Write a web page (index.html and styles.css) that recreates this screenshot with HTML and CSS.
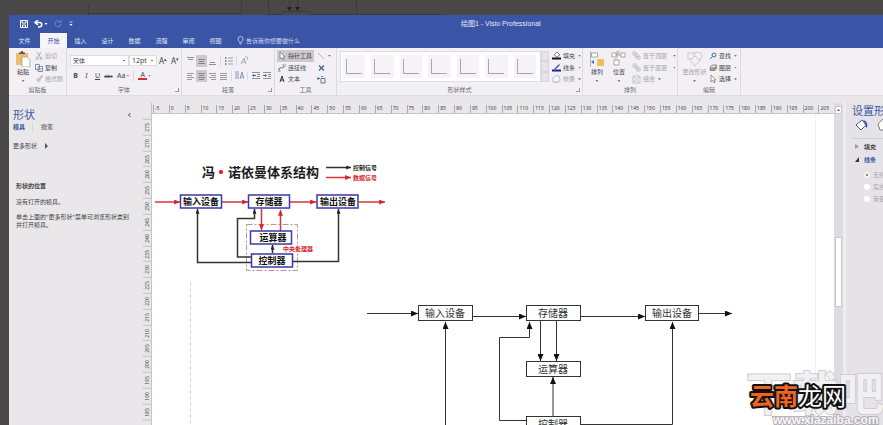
FILE: index.html
```html
<!DOCTYPE html>
<html lang="zh-CN">
<head>
<meta charset="utf-8">
<title>绘图1 - Visio Professional</title>
<link rel="stylesheet" href="styles.css">
</head>
<body>
<svg class="backdrop" aria-hidden="true"><path d="M88.500 5v10M241.500 0v15M268.500 0v15M356.500 0v15M289.500 0v10M297.500 0v10M282.500 15v-3.500h28v3.500M88 13.500h153M268 14.500h14M311 14.500h130"/><path class="tip" d="M287 7h5l-2.500 4zM295 7h5l-2.500 4z"/></svg>
<div class="app">
  <header class="titlebar">
    <div class="quick">
      <button aria-label="保存"><svg width="8" height="8"><path d="M.5.5h7v7h-7zM2 .5v2.500h4V.5M2.500 7.500V5h3v2.500" fill="none" stroke="#fff"/></svg></button>
      <button class="undo" aria-label="撤消"><svg width="14" height="8"><path d="M4 0L1 2.500l3 2.500M1 2.500h4.500c3 0 3 4 0 4.500H4" fill="none" stroke="#fff" stroke-width="1.500"/><path d="M10.500 3h3l-1.500 2z" fill="#fff"/></svg></button>
      <button aria-label="恢复" disabled><svg width="8" height="8"><path d="M5 1a3 3 0 1 0 2 3M4.500 2.500H7V0" fill="none" stroke="#7188c6"/></svg></button>
      <button class="more" aria-label="自定义快速访问工具栏"><svg width="4" height="6"><path d="M.5 1h3" stroke="#fff" stroke-width=".7"/><path d="M.5 3h3L2 5z" fill="#fff"/></svg></button>
    </div>
    <h1>绘图1 - Visio Professional</h1>
  </header>
  <nav class="tabs">
    <button class="file">文件</button><button class="active">开始</button><button>插入</button><button>设计</button><button>数据</button><button>流程</button><button>审阅</button><button>视图</button>
    <button class="tell"><svg width="7" height="9"><path d="M2.500 6.500C2.500 5 1 5 1 3a2.500 2.500 0 0 1 5 0c0 2-1.500 2-1.500 3.500zM2.500 8h2" fill="none" stroke="#d4dcf2" stroke-width=".8"/></svg>告诉我你想要做什么</button>
  </nav>

  <div class="ribbon">
    <section class="group clipboard">
      <div class="body">
        <button class="big"><svg width="16" height="16"><path d="M1 2h12v12H1z" fill="#e9bd72"/><path d="M4 3V1.500h1.500a1.500 1.500 0 0 1 3 0H10V3z" fill="#555"/><path d="M7 6h5l3 3v7H7z" fill="#fff" stroke="#999" stroke-width=".7"/></svg>粘贴<i class="caret"></i></button>
        <div class="stack">
          <button disabled><svg width="8" height="8"><path d="M2 0l3.500 5.500M6 0L2.500 5.500" stroke="#888"/><circle cx="2" cy="6.500" r="1" fill="none" stroke="#888"/><circle cx="6" cy="6.500" r="1" fill="none" stroke="#888"/></svg>剪切</button>
          <button><svg width="8" height="8"><path d="M.5.5h4v5h-4zM3 2.500h4.500v5H3z" fill="#fff" stroke="#5f7797" stroke-width=".8"/><path d="M4 4.500h2.500M4 6h2.500" stroke="#5f7797" stroke-width=".6"/></svg>复制</button>
          <button disabled><svg width="8" height="8"><path d="M7.500.500L4.500 4" stroke="#888" stroke-width="1.500"/><path d="M1 4.500l3-2 2 2.500-2.500 2.500z" fill="#aaa"/></svg>格式刷</button>
        </div>
      </div>
      <h2>剪贴板</h2>
    </section>

    <section class="group font">
      <div class="rows">
        <div class="row">
          <select class="face" aria-label="字体"><option>宋体</option></select>
          <select class="size" aria-label="字号"><option>12pt</option></select>
          <button class="letter grow" aria-label="增大字号">A<sup>▴</sup></button>
          <button class="letter" aria-label="减小字号">A<sup>▾</sup></button>
        </div>
        <div class="row marks">
          <button><b>B</b></button><button><em>I</em></button><button><u>U</u></button><button><s>abc</s></button><button>Aa<i class="caret"></i></button><span class="rule"></span><button><span class="ink">A</span><i class="caret"></i></button>
        </div>
      </div>
      <h2>字体</h2><i class="launcher"></i>
    </section>

    <section class="group para">
      <div class="rows">
        <div class="row icons">
          <button aria-label="顶端对齐"><svg width="7" height="8"><path d="M0 .5h7M1 2.500h5" stroke="#777" stroke-width=".8"/></svg></button>
          <button class="on" aria-label="中部对齐"><svg width="7" height="8"><path d="M0 2.500h7M1 4.500h5M0 6.500h7" stroke="#777" stroke-width=".8"/></svg></button>
          <button aria-label="底端对齐"><svg width="7" height="8"><path d="M1 5.500h5M0 7.500h7" stroke="#777" stroke-width=".8"/></svg></button>
          <span class="rule"></span>
          <button aria-label="项目符号"><svg width="8" height="8"><path d="M0 1h1.500M0 4h1.500M0 7h1.500" stroke="#4775ad" stroke-width="1.500"/><path d="M3 1h5M3 4h5M3 7h5" stroke="#888" stroke-width=".8"/></svg></button>
          <span class="rule"></span>
          <button aria-label="旋转文本"><svg width="9" height="9"><path d="M1 8l3-6 2 6M2 6h3.500M5 1c3-1 3 2 2 3" fill="none" stroke="#929da9" stroke-width=".8"/></svg></button>
        </div>
        <div class="row icons">
          <button aria-label="左对齐"><svg width="7" height="8"><path d="M0 1.500h7M0 3.500h5M0 5.500h7M0 7.500h5" stroke="#888" stroke-width=".8"/></svg></button>
          <button class="on" aria-label="居中"><svg width="7" height="8"><path d="M0 1.500h7M1 3.500h5M0 5.500h7M1 7.500h5" stroke="#777" stroke-width=".8"/></svg></button>
          <button aria-label="右对齐"><svg width="7" height="8"><path d="M0 1.500h7M2 3.500h5M0 5.500h7M2 7.500h5" stroke="#888" stroke-width=".8"/></svg></button>
          <button aria-label="两端对齐"><svg width="7" height="8"><path d="M0 1.500h7M0 3.500h7M0 5.500h7M0 7.500h7" stroke="#888" stroke-width=".8"/></svg></button>
          <span class="rule"></span>
          <button aria-label="文字方向"><svg width="9" height="9"><path d="M1 0v8M3 0v8M5 8l2-7 2 7M5.500 6h3" fill="none" stroke="#6888a8" stroke-width=".8"/></svg></button>
          <span class="rule"></span>
          <button aria-label="减少缩进"><svg width="8" height="8"><path d="M0 .5h8M5 2.500h3M5 4.500h3M0 6.500h8" stroke="#777" stroke-width=".8"/><path d="M0 3.500L2 2v1h2v1H2v1z" fill="#3265a5"/></svg></button>
          <button aria-label="增加缩进"><svg width="8" height="8"><path d="M0 .5h8M5 2.500h3M5 4.500h3M0 6.500h8" stroke="#777" stroke-width=".8"/><path d="M4 3.500L2 2v1H0v1h2v1z" fill="#3265a5"/></svg></button>
        </div>
      </div>
      <h2>段落</h2><i class="launcher"></i>
    </section>

    <section class="group tools">
      <div class="body">
        <div class="stack">
          <button class="on"><svg width="8" height="8"><path d="M2 0v7l1.500-1.500L5 8l1-.5L5 5h2z" fill="#fff" stroke="#555" stroke-width=".6"/></svg>指针工具</button>
          <button><svg width="8" height="8"><path d="M1 7V5c0-2 5 0 5-3" fill="none" stroke="#56677c"/><path d="M0 6h2v2H0zM5 0h3v2H5z" fill="#fff" stroke="#56677c" stroke-width=".5"/></svg>连接线</button>
          <button><svg width="8" height="8"><path d="M2 7l2-6 2 6M2.500 5h3" fill="none" stroke="#333"/></svg>文本</button>
        </div>
        <div class="stack">
          <button aria-label="线条"><svg width="8" height="8"><path d="M1 1l6 6" stroke="#999" stroke-width=".7"/></svg><i class="caret"></i></button>
          <button aria-label="连接点"><svg width="9" height="8"><path d="M2 1.500l5 5M7 1.500l-5 5" stroke="#3a638f" stroke-width="1.200"/></svg></button>
          <button aria-label="文本块"><svg width="9" height="9"><path d="M4 3.500h4v4.500H4zM0 3.500h3M1.500 2L0 3.500 1.500 5M4 1.500h2" fill="none" stroke="#4a6b88" stroke-width=".9"/></svg></button>
        </div>
      </div>
      <h2>工具</h2>
    </section>

    <section class="group styles">
      <div class="body">
        <div class="gallery">
          <button aria-label="样式 1"></button><button aria-label="样式 2"></button><button aria-label="样式 3"></button><button aria-label="样式 4"></button><button aria-label="样式 5"></button><button aria-label="样式 6"></button><button aria-label="样式 7"></button>
        </div>
        <div class="pager"><button aria-label="上一行"></button><button aria-label="下一行"></button><button aria-label="其他"></button></div>
        <div class="stack">
          <button><svg width="9" height="9"><path d="M2 4l3-3 3 3-3 2z" fill="#fff" stroke="#555" stroke-width=".7"/><path d="M0 6.500h9v2H0z" fill="#111"/></svg>填充<i class="caret"></i></button>
          <button><svg width="9" height="9"><path d="M2 6l5-5 1 1-4 4z" fill="#3b5a96"/><path d="M0 6.500h9v2H0z" fill="#1c1ca8"/></svg>线条<i class="caret"></i></button>
          <button disabled><svg width="9" height="9"><path d="M3 1h4l1 4-2 2H1V3z" fill="#fff" stroke="#888" stroke-width=".8"/><path d="M2 7.500h4l3-3" stroke="#bb8c99" fill="none"/></svg>效果<i class="caret"></i></button>
        </div>
      </div>
      <h2>形状样式</h2><i class="launcher"></i>
    </section>

    <section class="group arrange">
      <div class="body">
        <button class="big"><svg width="16" height="16"><path d="M1.500 0v16" stroke="#999" stroke-width=".7"/><path d="M2.500 2h6v4h-6z" fill="#fff" stroke="#888" stroke-width=".7"/><path d="M8 8h7v7H8z" fill="#eebd64"/><path d="M2 11l3-2v4z" fill="#3973aa"/></svg>排列<i class="caret"></i></button>
        <button class="big"><svg width="16" height="16"><path d="M5 4h5M6 7V4M3 9h4" stroke="#888" stroke-width=".6"/><path d="M1 2h4v4H1zM10 2h4v4h-4zM3 9h5v5H3zM6 0h2v3H6z" fill="#fff" stroke="#987c78" stroke-width=".7"/></svg>位置<i class="caret"></i></button>
        <div class="stack">
          <button disabled><svg width="9" height="9"><path d="M1 1h3v3H1zM5 5h3v3H5zM3 3h3v3H3z" fill="#eee" stroke="#888" stroke-width=".7"/></svg>置于顶层<i class="caret far"></i></button>
          <button disabled><svg width="9" height="9"><path d="M3 3h3v3H3zM1 1h3v3H1zM5 5h3v3H5z" fill="#eee" stroke="#888" stroke-width=".7"/></svg>置于底层<i class="caret far"></i></button>
          <button disabled><svg width="9" height="9"><path d="M1 1h7v7H1zM2 2l5 5M7 2L2 7" fill="none" stroke="#888" stroke-width=".7"/></svg>组合<i class="caret"></i></button>
        </div>
      </div>
      <h2>排列</h2>
    </section>

    <section class="group edit">
      <div class="body">
        <button class="big" disabled><svg width="16" height="16"><path d="M1 2h7v6H1z" fill="none" stroke="#888" stroke-width=".6"/><circle cx="11" cy="5" r="4" fill="#f2f0f4" stroke="#888" stroke-width=".6"/><path d="M3 9l5-4 5 4-5 6z" fill="#f2f0f4" stroke="#888" stroke-width=".6"/></svg>更改形状<i class="caret"></i></button>
        <div class="stack">
          <button><svg width="8" height="8"><circle cx="5" cy="3" r="2" fill="none" stroke="#39699e"/><path d="M3.500 4.500L1 7" stroke="#39699e"/></svg>查找<i class="caret"></i></button>
          <button><svg width="8" height="8"><path d="M1 5l2-2h5L6 6.500H1z" fill="#c9a150" stroke="#567" stroke-width=".6"/><path d="M1 3l2-2h5L6 4H1z" fill="#ddd" stroke="#567" stroke-width=".6"/></svg>图层<i class="caret"></i></button>
          <button><svg width="8" height="8"><path d="M2 0v7l1.500-1.500L5 8l1-.5L5 5h2z" fill="#fff" stroke="#555" stroke-width=".6"/></svg>选择<i class="caret"></i></button>
        </div>
      </div>
      <h2>编辑</h2>
    </section>
  </div>

  <main class="workspace">
    <aside class="shapes">
      <header><h2>形状</h2><button aria-label="折叠"><svg width="4" height="6"><path d="M3.500 1L1.500 3l2 2" fill="none" stroke="#444"/></svg></button></header>
      <div class="switch"><button class="active">模具</button><button>搜索</button></div>
      <button class="moreshapes">更多形状<svg width="4" height="6"><path d="M0 0l3 3-3 3z" fill="#555"/></svg></button>
      <div class="help">
        <h3>形状的位置</h3>
        <p>没有打开的模具。</p>
        <p>单击上面的"更多形状"菜单可浏览形状类别<br>并打开模具。</p>
      </div>
    </aside>

    <div class="vruler"><span>275</span><span>270</span><span>265</span><span>260</span><span>255</span><span>250</span><span>245</span><span>240</span><span>235</span><span>230</span><span>225</span><span>220</span><span>215</span><span>210</span><span>205</span><span>200</span><span>195</span><span>190</span><span>185</span><span class="rest"></span></div>

    <div class="page">
      <div class="hruler"><span>-5</span><span>0</span><span>5</span><span>10</span><span>15</span><span>20</span><span>25</span><span>30</span><span>35</span><span>40</span><span>45</span><span>50</span><span>55</span><span>60</span><span>65</span><span>70</span><span>75</span><span>80</span><span>85</span><span>90</span><span>95</span><span>100</span><span>105</span><span>110</span><span>115</span><span>120</span><span>125</span><span>130</span><span>135</span><span>140</span><span>145</span><span>150</span><span>155</span><span>160</span><span>165</span><span>170</span><span>175</span><span>180</span><span>185</span><span>190</span><span>195</span><span>200</span><span>205</span></div>
      <svg class="canvas" viewBox="152 114 682 311" preserveAspectRatio="xMinYMin slice">
        <defs>
          <marker id="k" viewBox="0 0 7 6" refX="7" refY="3" markerWidth="7" markerHeight="6" markerUnits="userSpaceOnUse" orient="auto"><path d="M0 0l7 3-7 3z" fill="#111"/></marker>
          <marker id="r" viewBox="0 0 7 6" refX="7" refY="3" markerWidth="6" markerHeight="5" markerUnits="userSpaceOnUse" orient="auto"><path d="M0 0l7 3-7 3z" fill="#d8232c"/></marker>
          <marker id="s" viewBox="0 0 7 6" refX="7" refY="3" markerWidth="6" markerHeight="4" markerUnits="userSpaceOnUse" orient="auto"><path d="M0 0l7 3-7 3z" fill="#222"/></marker>
        </defs>
        <path class="margin" d="M190.500 282v143"/><path class="margin faint" d="M815.500 114v311"/>
        <g class="heading"><text x="202" y="177">冯</text><text class="dot" x="221" y="178">·</text><text x="228" y="177">诺依曼体系结构</text></g>
        <g class="source">
          <path class="ctl" marker-end="url(#s)" d="M326 167.500h25"/>
          <path class="dat" marker-end="url(#r)" d="M326 177.500h25"/>
          <text class="note" x="353" y="170">控制信号</text><text class="note red" x="353" y="180">数据信号</text>
          <rect class="cpu" x="246.500" y="224.500" width="51" height="46"/>
          <path class="dat" marker-end="url(#r)" d="M155 202h25"/><path class="dat" marker-end="url(#r)" d="M222 202h26"/><path class="dat" marker-end="url(#r)" d="M290 202h26"/><path class="dat" marker-end="url(#r)" d="M359 202h26"/>
          <path class="dat" marker-end="url(#r)" d="M261.500 209v21"/><path class="dat" marker-end="url(#r)" d="M280.500 231v-21"/>
          <path class="ctl" marker-end="url(#s)" d="M251 262.500h-53.500V209"/><path class="ctl" marker-end="url(#s)" d="M251 257h-13.500v-38.500h17V209"/><path class="ctl" marker-end="url(#s)" d="M272.500 253v-8"/><path class="ctl" marker-end="url(#s)" d="M293 261.500h45.500V209"/>
          <g class="box"><rect x="180.500" y="195" width="41" height="13"/><rect x="248.500" y="195" width="41" height="13"/><rect x="317" y="195" width="41" height="13"/><rect x="250.500" y="231" width="41" height="13"/><rect x="251.500" y="254" width="41" height="13"/></g>
          <g class="name"><text x="201" y="205">输入设备</text><text x="269" y="205">存储器</text><text x="338" y="205">输出设备</text><text x="273" y="241">运算器</text><text x="272" y="264">控制器</text></g>
          <text class="note red" x="283" y="251">中央处理器</text>
        </g>
        <g class="copy">
          <path marker-end="url(#k)" d="M367 313.500h51"/><path marker-end="url(#k)" d="M473 316.500h53"/><path marker-end="url(#k)" d="M581 316.500h64"/><path marker-end="url(#k)" d="M699 313.500h33"/>
          <path marker-end="url(#k)" d="M445.500 430V322"/><path marker-end="url(#k)" d="M540.500 321v40"/><path marker-end="url(#k)" d="M556.500 321v40"/><path marker-end="url(#k)" d="M553 416v-39"/>
          <path marker-end="url(#k)" d="M526 420.500h-26.500v-83h30V322"/><path marker-end="url(#k)" d="M581 424.500h91.500V322"/>
          <rect x="418.500" y="305.500" width="54" height="15"/><rect x="526.500" y="305.500" width="54" height="15"/><rect x="645.500" y="305.500" width="53" height="15"/><rect x="526.500" y="361.500" width="54" height="15"/><rect x="526.500" y="416.500" width="54" height="15"/>
          <text x="445" y="317">输入设备</text><text x="553" y="317">存储器</text><text x="672" y="317">输出设备</text><text x="553" y="373">运算器</text><text x="553" y="428">控制器</text>
        </g>
      </svg>
    </div>

    <div class="scroll"><button aria-label="向上滚动"><svg width="5" height="4"><path d="M1 3h3L2.500 1z" fill="#555"/></svg></button><div class="thumb"></div></div>

    <aside class="format">
      <h2>设置形状格式</h2>
      <div class="kinds">
        <button aria-label="填充与线条"><svg width="13" height="13"><path d="M1 7l6-5 4 5-5 5z" fill="#fff" stroke="#465b90"/><path d="M8 2c4 1 5 4 4 8-2-1-1-4-4-8" fill="#3c55a3"/></svg></button>
        <button aria-label="效果"><svg width="13" height="13"><path d="M1 6l5-5 6 5-2 6H3z" fill="#fff" stroke="#777"/></svg></button>
      </div>
      <details><summary>填充</summary></details>
      <details open><summary>线条</summary>
        <label><input type="radio" name="line" checked disabled>无线条</label>
        <label><input type="radio" name="line" disabled>实线</label>
        <label><input type="radio" name="line" disabled>渐变线</label>
      </details>
    </aside>
  </main>
</div>
<svg class="mark" width="140" height="60" viewBox="745 365 140 60" role="img" aria-label="下载吧 云南龙网">
  <g class="ghost"><text x="746" y="410">下载吧</text></g>
  <text class="site" x="773" y="424">www.xiazaiba.com</text>
  <g class="brand"><text class="hot" x="750" y="405">云南</text><text class="thin" x="798" y="405">龙网</text></g>
</svg>
</body>
</html>
```
FILE: styles.css
```css
* { box-sizing: border-box; }
body {
  margin: 0;
  height: 100vh;
  padding: 15px 0 0 9px;
  overflow: hidden;
  position: relative;
  background: #4a4749;
  color: #444;
  font: 6px/8px "Noto Sans", "Noto Sans CJK SC", sans-serif;
}
h1, h2, h3, p { margin: 0; font-weight: 400; font-size: inherit; }
button, select {
  margin: 0; padding: 0; border: 0; background: none;
  color: inherit; font: inherit; white-space: nowrap;
}
button { display: inline-flex; align-items: center; justify-content: center; }
svg { display: block; flex: none; }
.backdrop { position: absolute; left: 0; top: 0; width: 100%; height: 15px; fill: none; stroke: #3c3a3c; }
.backdrop .tip { fill: #222; stroke: none; }
.app { height: 100%; display: flex; flex-direction: column; background: #e9e7ea; position: relative; }

.titlebar { display: grid; grid-template-columns: 452px 1fr; align-items: center; height: 18px; background: #3a55a6; color: #e5e9f6; }
.titlebar h1 { font: 7px/8px "Liberation Sans", "Noto Sans CJK SC", sans-serif; white-space: nowrap; }
.quick { display: flex; align-items: center; padding-left: 11px; gap: 6px; }
.quick .more { margin-left: 1px; }
.tabs { display: flex; height: 15px; background: #3a55a6; color: #dfe5f5; }
.tabs button { width: 27px; }
.tabs .file { width: 31px; }
.tabs .active { background: #f6f5f9; color: #3a55a6; }
.tabs .tell { width: auto; padding-left: 8px; gap: 2px; color: #cbd5ee; }

.ribbon { display: flex; height: 48px; background: #f2f0f4; border-bottom: 1px solid #e0dde2; }
.group { display: flex; flex-direction: column; position: relative; flex: none; padding-top: 2px; border-right: 1px solid #dcd9df; }
.group h2 { text-align: center; color: #6a686c; line-height: 10px; }
.clipboard { width: 58px; }
.font { width: 115px; }
.para { width: 93px; }
.tools { width: 62px; }
.styles { width: 246px; }
.arrange { width: 95px; }
.edit { width: 63px; }
.body { display: flex; height: 35px; padding-left: 3px; }
.stack { display: flex; flex-direction: column; align-items: flex-start; }
.stack button { height: 12px; gap: 2px; padding: 0 1px; }
.big { flex-direction: column; width: 22px; gap: 1px; line-height: 9px; justify-content: flex-start; padding-top: 1px; }
.edit .big { width: 27px; }
button:disabled { color: #a5a2a8; }
.stack button:disabled svg, .big:disabled svg { opacity: .6; }
.caret { width: 3px; height: 2px; margin-left: 1px; background: #777; clip-path: polygon(0 0, 100% 0, 50% 100%); }
.big .caret { margin: 2px 0 0; }
.caret.far { margin-left: 4px; }
.on { background: #cbc9cc; }
.launcher { position: absolute; right: 2px; bottom: 3px; width: 4px; height: 4px; border: 1px solid #999; border-top: 0; border-left: 0; }

.rows { height: 35px; padding: 3px 0 0 3px; }
.row { display: flex; align-items: center; height: 15px; }
select {
  appearance: none; height: 11px; padding-left: 2px; border: 1px solid #dedbe1; border-radius: 0; color: #444;
  background: #fff linear-gradient(#777, #777) no-repeat right 3px center / 2px 1px;
}
.face { width: 59px; }
.size { width: 28px; font-size: 7px; }
.letter { width: 12px; font-size: 8px; }
.letter sup { font-size: 5px; line-height: 4px; align-self: flex-start; }
.marks { font-size: 7px; }
.marks button { min-width: 11px; }
.marks s { font-size: 5px; }
.marks button:nth-of-type(5) { margin-left: 3px; }
.rule { width: 1px; height: 10px; margin: 0 4px; background: #dbd8dd; }
.ink { border-bottom: 2px solid #d42b32; line-height: 7px; padding: 0 2px; }
.icons button { width: 11px; height: 12px; }
.icons .rule { margin: 0 2px; }

.tools .body { padding-left: 2px; gap: 2px; }
.tools .stack button { padding-right: 2px; }
.gallery { display: grid; grid-template-columns: repeat(7, 1fr); width: 201px; height: 31px; margin-top: 1px; padding: 3px 0; background: #fff; border: 1px solid #e1dde4; }
.gallery button { margin: 0 4px 0 2px; background: linear-gradient(#aaa5ac, #aaa5ac) 3px 4px / 1px 14px no-repeat, linear-gradient(#aaa5ac, #aaa5ac) 3px 18px / 16px 1px no-repeat, #f6f2f8; }
.pager { display: grid; width: 8px; height: 31px; margin: 1px 2px 0 0; }
.pager button { background: #e6e3e9; border: 1px solid #d7d4db; }
.arrange .stack { padding-left: 1px; }

.workspace { flex: 1; display: flex; min-height: 0; padding-top: 7px; }
.shapes { width: 134px; padding: 5px 0 0 4px; }
.shapes header { display: flex; align-items: center; justify-content: space-between; padding-right: 12px; }
.shapes h2, .format h2 { font-size: 11px; line-height: 14px; color: #4159a4; white-space: nowrap; }
.switch { display: flex; line-height: 11px; }
.switch .active { color: #3a55a6; font-weight: 700; padding-right: 7px; border-right: 1px solid #d8d6da; }
.switch button + button { padding-left: 8px; }
.moreshapes { margin-top: 9px; gap: 8px; }
.help { padding: 32px 6px 0 3px; }
.help h3 { font-weight: 700; }
.help p { margin-top: 8px; }
.help p + p { margin-top: 7px; }

.vruler { width: 9px; padding-top: 16px; display: flex; flex-direction: column; border-right: 1px solid #c5c2c8; font-size: 5px; overflow: hidden; }
.vruler span { flex: 1 1 0; display: flex; align-items: center; justify-content: center; line-height: 6px; writing-mode: vertical-rl; transform: rotate(180deg); border-bottom: 1px solid #c5c2c8; }
.vruler .rest { flex-grow: .3; }
.page { flex: 1; min-width: 0; display: flex; flex-direction: column; }
.hruler { display: flex; align-items: flex-end; height: 11px; padding-left: 1px; border-bottom: 1px solid #c5c2c8; font-size: 5px; }
.hruler span { flex: 1 1 0; min-width: 0; height: 8px; padding-left: 1px; border-left: 1px solid #aaa7ad; line-height: 6px; }
.canvas { flex: 1; width: 100%; min-height: 0; background: #fff; }

.scroll { width: 9px; padding: 3px 1px 0; background: #dedce0; }
.scroll button { display: flex; width: 100%; height: 8px; background: #fff; border: 1px solid #c9c6cc; }
.thumb { height: 22%; margin-top: 123px; background: #fff; border: 1px solid #c9c6cc; }
.format { width: 40px; padding: 1px 0 0 6px; overflow: hidden; background: #e5e3e7; border-left: 3px solid #eeecef; }
.kinds { display: flex; gap: 9px; height: 21px; padding-left: 3px; border-bottom: 1px solid #d0cdd3; }
.kinds button { flex: none; height: 13px; }
summary { display: flex; align-items: center; gap: 5px; height: 13px; padding-left: 3px; font-weight: 700; white-space: nowrap; list-style: none; }
summary::before { content: ""; width: 4px; height: 5px; background: #999; clip-path: polygon(0 0, 100% 50%, 0 100%); }
[open] summary { color: #3a55a6; margin-bottom: 3px; }
[open] summary::before { background: #333; clip-path: polygon(100% 0, 100% 100%, 0 100%); }
.kinds + details { margin-top: 1px; }
.format label { display: flex; align-items: center; gap: 3px; height: 12px; padding-left: 12px; color: #a5a2a8; white-space: nowrap; }
.format input { appearance: none; flex: none; width: 6px; height: 6px; margin: 0; border-radius: 50%; background: #fff; }
.format input:checked { background: radial-gradient(circle, #888 1px, #f4f3f5 1px); }

.canvas text { font-family: "Noto Sans CJK SC", sans-serif; }
.margin { stroke: #ddd6de; stroke-dasharray: 4 2; fill: none; }
.margin.faint { stroke: #ebe8ed; stroke-dasharray: 2 1; }
.heading { font-size: 13px; font-weight: 700; fill: #1b1b1b; }
.heading .dot { fill: #d8232c; font-size: 16px; text-anchor: middle; }
.source path { fill: none; stroke-width: 1.5; }
.source .ctl { stroke: #333; }
.source .dat { stroke: #d9343c; }
.note { font-size: 6px; font-weight: 700; fill: #222; }
.note.red { fill: #d8232c; }
.cpu { fill: none; stroke: #c98f96; stroke-dasharray: 6 2 2 2; }
.box rect { fill: #fff; stroke: #3a39a6; stroke-width: 1.5; }
.name { font-size: 9px; font-weight: 700; fill: #111; text-anchor: middle; }
.copy { stroke: #333; }
.copy path { fill: none; }
.copy rect { fill: #fff; }
.copy text { font-size: 10px; fill: #333; stroke: none; text-anchor: middle; }

.mark { position: absolute; right: -2px; bottom: 0; font-family: "Noto Sans CJK SC", sans-serif; font-weight: 700; }
.ghost { font-size: 46px; fill: #f1f0f2; stroke: #cfccd1; stroke-width: 2; paint-order: stroke; }
.site { font: 700 12px "Liberation Sans", sans-serif; fill: #f6f5f7; stroke: #b3b0b5; stroke-width: 2; paint-order: stroke; }
.brand { font-size: 24px; fill: #fff; stroke: #111; stroke-width: 4; stroke-linejoin: round; paint-order: stroke; }
.brand .hot { fill: #ee6420; }
.brand .thin { font-weight: 400; }
```
